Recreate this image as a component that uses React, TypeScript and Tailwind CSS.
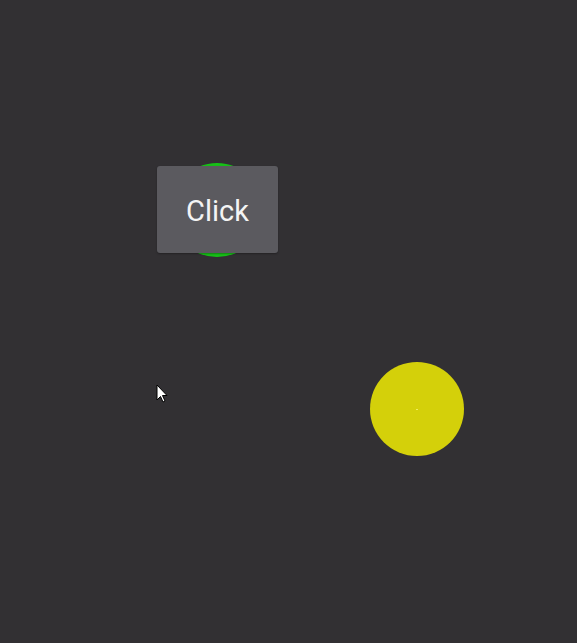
export default function App() {
  return (
    <div className="relative w-[577px] h-[643px] overflow-hidden bg-[#323033]" style={{ fontFamily: "Roboto, 'Noto Sans', sans-serif" }}>
      <div className="absolute left-[170px] top-[163px] w-[94px] h-[94px] rounded-full bg-[#17c017]" />
      <button className="absolute left-[157px] top-[166px] w-[121px] h-[87px] rounded-[3px] bg-[#5b5a5f] text-[#f4f4f4] text-[29px] flex items-center justify-center pt-[4px] shadow-[0_1px_2px_rgba(0,0,0,0.3)]">
        Click
      </button>
      <div className="absolute left-[370px] top-[362px] w-[94px] h-[94px] rounded-full bg-[#d4d00a] flex items-center justify-center">
        <div className="w-[2px] h-[1px] bg-[#f0ee60]" />
      </div>
      <svg className="absolute left-[156px] top-[384px]" width="13" height="20" viewBox="0 0 13 20">
        <path d="M1 1 L1 16 L4.5 12.5 L7 18 L9 17 L6.5 11.5 L11 11.5 Z" fill="#fff" stroke="#000" strokeWidth="1" strokeLinejoin="miter" />
      </svg>
    </div>
  );
}
